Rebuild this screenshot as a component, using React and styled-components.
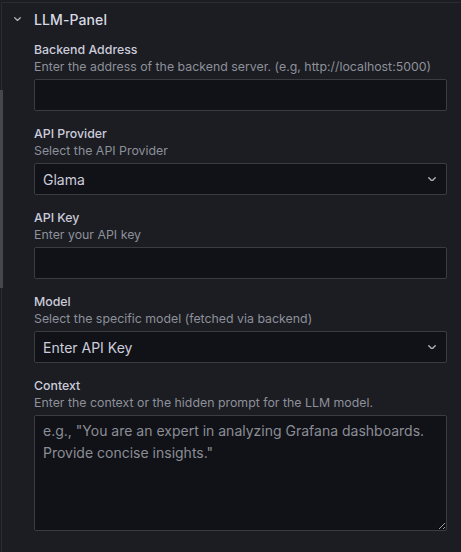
import React from "react";
import styled, { createGlobalStyle } from "styled-components";

const Global = createGlobalStyle`
  html, body { margin: 0; padding: 0; background: #1b1d22; }
  body { font-family: Inter, "Noto Sans", sans-serif; color: #ccccdc; }
  * { box-sizing: border-box; }
`;

const Page = styled.div`
  position: relative;
  width: 461px;
  height: 552px;
  padding-top: 2px;
  background: #1b1d22;
  overflow: hidden;
`;

const Pane = styled.div`
  height: 550px;
  border-top: 1px solid #2a2c31;
  border-left: 1px solid #2a2c31;
  margin-left: 1px;
`;

const Scrollbar = styled.div`
  position: absolute;
  left: 0;
  top: 90px;
  width: 3px;
  height: 198px;
  background: #45474d;
`;

const Header = styled.div`
  display: flex;
  align-items: center;
  height: 32px;
  padding-left: 12px;
  gap: 13px;
`;

const Title = styled.div`
  font-size: 14px;
  font-weight: 500;
  color: #d8d9e3;
  letter-spacing: 0.1px;
`;

const Body = styled.div`
  display: flex;
  flex-direction: column;
  gap: 15px;
  padding: 7px 14px 0 32px;
`;

const Field = styled.div`
  display: flex;
  flex-direction: column;
`;

const Label = styled.div`
  font-size: 12.35px;
  font-weight: 500;
  line-height: 16px;
  color: #ccccdc;
`;

const Description = styled.div`
  font-size: 12.35px;
  line-height: 18px;
  color: #8e909a;
  margin-bottom: 3px;
`;

const Input = styled.input`
  height: 32px;
  width: 100%;
  background: #111217;
  border: 1px solid #3a3c42;
  border-radius: 2px;
  outline: none;
  color: #ccccdc;
  font-family: inherit;
  font-size: 14px;
  padding: 0 8px;
`;

const Select = styled.div`
  height: 32px;
  display: flex;
  align-items: center;
  justify-content: space-between;
  background: #111217;
  border: 1px solid #3a3c42;
  border-radius: 2px;
  padding: 0 10px 0 8px;
  font-size: 14px;
  color: #ccccdc;
`;

const TextArea = styled.textarea`
  height: 116px;
  width: 100%;
  background: #111217;
  border: 1px solid #3a3c42;
  border-radius: 2px;
  outline: none;
  resize: vertical;
  color: #ccccdc;
  font-family: inherit;
  font-size: 14px;
  line-height: 22px;
  padding: 4px 8px;
  &::placeholder { color: #8b8d96; }
`;

const Chevron = ({ size = 8, color = "#b0b2bb" }) => (
  <svg width={size} height={size * 0.6} viewBox="0 0 10 6" fill="none">
    <path d="M1 1l4 4 4-4" stroke={color} strokeWidth="1.8" strokeLinecap="round" strokeLinejoin="round" />
  </svg>
);

const fields = [
  { label: "Backend Address", desc: "Enter the address of the backend server. (e.g, http://localhost:5000)", kind: "input" },
  { label: "API Provider", desc: "Select the API Provider", kind: "select", value: "Glama" },
  { label: "API Key", desc: "Enter your API key", kind: "input" },
  { label: "Model", desc: "Select the specific model (fetched via backend)", kind: "select", value: "Enter API Key" },
];

export default function App() {
  return (
    <Page>
      <Global />
      <Pane>
        <Header>
          <Chevron size={7} />
          <Title>LLM-Panel</Title>
        </Header>
        <Body>
          {fields.map((f) => (
            <Field key={f.label}>
              <Label>{f.label}</Label>
              <Description>{f.desc}</Description>
              {f.kind === "input" ? (
                <Input />
              ) : (
                <Select>
                  <span>{f.value}</span>
                  <Chevron size={8} />
                </Select>
              )}
            </Field>
          ))}
          <Field>
            <Label>Context</Label>
            <Description>Enter the context or the hidden prompt for the LLM model.</Description>
            <TextArea placeholder={'e.g., "You are an expert in analyzing Grafana dashboards. Provide concise insights."'} />
          </Field>
        </Body>
      </Pane>
      <Scrollbar />
    </Page>
  );
}
